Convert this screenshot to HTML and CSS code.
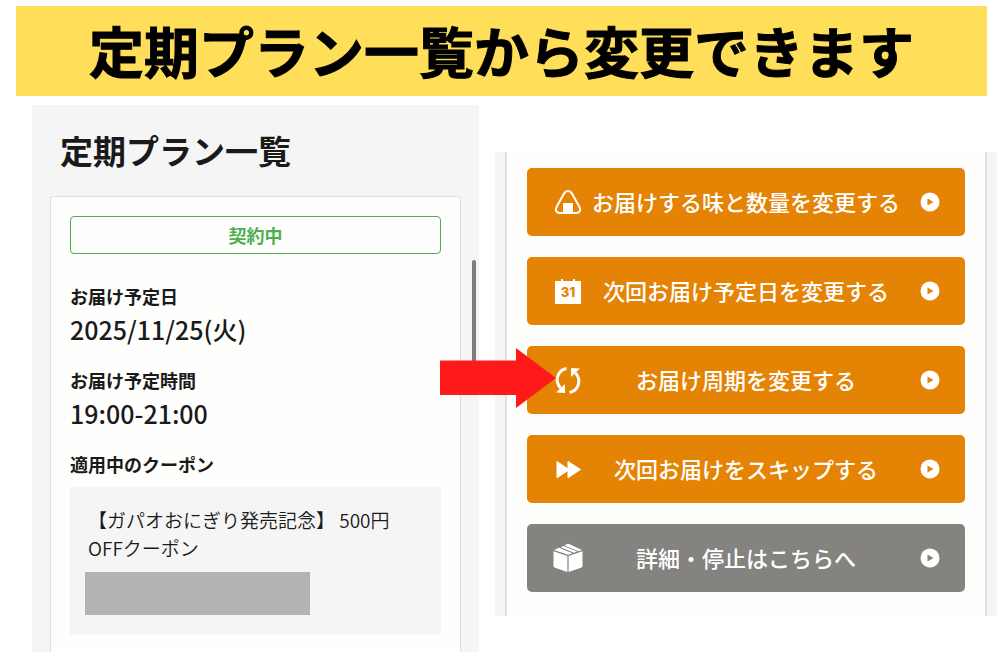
FILE: index.html
```html
<!DOCTYPE html>
<html lang="ja">
<head>
  <meta charset="UTF-8">
  <meta name="viewport" content="width=device-width, initial-scale=1">
  <title>定期プラン一覧</title>
  <link rel="stylesheet" href="styles.css">
</head>
<body>
  <h1 class="banner">定期プラン一覧から変更できます</h1>

  <main class="columns">
    <!-- プラン詳細 -->
    <section class="plan">
      <h2 class="plan__title">定期プラン一覧</h2>
      <div class="plan__card">
        <p class="plan__status">契約中</p>
        <dl class="plan__info">
          <dt>お届け予定日</dt>
          <dd>2025/11/25(火)</dd>
          <dt>お届け予定時間</dt>
          <dd>19:00-21:00</dd>
          <dt>適用中のクーポン</dt>
        </dl>
        <div class="coupon">
          <p class="coupon__name">【ガパオおにぎり発売記念】 500円<br>OFFクーポン</p>
          <div class="coupon__code"></div>
        </div>
      </div>
      <div class="plan__scrollbar"></div>
    </section>

    <!-- 変更メニュー -->
    <section class="menu">
      <ul class="menu__list">
        <li class="menu__item">
          <button class="btn" type="button">
            <svg class="btn__icon" viewBox="0 0 32 32">
              <path d="M16 4.900c-1.700 0-2.900.8-3.800 2.400L4.800 20.400C2.900 23.800 4 27 7.500 27h17c3.500 0 4.600-3.200 2.700-6.600L19.800 7.300C18.900 5.700 17.700 4.900 16 4.900z" fill="none" stroke="#fff" stroke-width="2"/>
              <path d="M11 17h10v10H11z" fill="#fff"/>
            </svg>
            <span class="btn__text">お届けする味と数量を変更する</span>
            <svg class="btn__play" viewBox="0 0 20 20"><circle cx="10" cy="10" r="9.500" fill="#fff"/><path d="M7.500 6.500v7l6-3.500z" fill="currentColor"/></svg>
          </button>
        </li>
        <li class="menu__item">
          <button class="btn" type="button">
            <svg class="btn__icon" viewBox="0 0 32 32">
              <path d="M4 6h5V4h2v2h10V4h2v2h6v23H3V6z" fill="#fff"/>
              <text class="btn__day" x="16" y="22" text-anchor="middle">31</text>
            </svg>
            <span class="btn__text">次回お届け予定日を変更する</span>
            <svg class="btn__play" viewBox="0 0 20 20"><circle cx="10" cy="10" r="9.500" fill="#fff"/><path d="M7.500 6.500v7l6-3.500z" fill="currentColor"/></svg>
          </button>
        </li>
        <li class="menu__item">
          <button class="btn" type="button">
            <svg class="btn__icon" viewBox="0 0 32 32">
              <path d="M14.500 4.500C6.500 6 1.500 16 8.500 24" fill="none" stroke="#fff" stroke-width="3"/>
              <path d="M4 28.500l9 .5V20z" fill="#fff"/>
              <path d="M17.500 28.500C25.500 27 30.500 17 23.500 9" fill="none" stroke="#fff" stroke-width="3"/>
              <path d="M28 4.500L19 4v9z" fill="#fff"/>
            </svg>
            <span class="btn__text">お届け周期を変更する</span>
            <svg class="btn__play" viewBox="0 0 20 20"><circle cx="10" cy="10" r="9.500" fill="#fff"/><path d="M7.500 6.500v7l6-3.500z" fill="currentColor"/></svg>
          </button>
          <svg class="menu__pointer" viewBox="0 0 116 60"><path d="M0 12.500h76V0l40 30-40 30V47H0z" fill="#ff1a1a"/></svg>
        </li>
        <li class="menu__item">
          <button class="btn" type="button">
            <svg class="btn__icon" viewBox="0 0 32 32">
              <path d="M5 8.500L16 16V8.500L28.500 16.500 16 24.800v-7.300L5 24.800z" fill="#fff" stroke="#fff" stroke-linejoin="round"/>
            </svg>
            <span class="btn__text">次回お届けをスキップする</span>
            <svg class="btn__play" viewBox="0 0 20 20"><circle cx="10" cy="10" r="9.500" fill="#fff"/><path d="M7.500 6.500v7l6-3.500z" fill="currentColor"/></svg>
          </button>
        </li>
        <li class="menu__item">
          <button class="btn btn--gray" type="button">
            <svg class="btn__icon" viewBox="0 0 32 32">
              <path d="M1.500 9.300L15.400 14v16L3 25.800Q1.500 25.200 1.500 24zM30.500 9.300L16.600 14v16L29 25.800q1.500-.6 1.500-1.800z" fill="#fff"/>
              <path d="M2 8l5-2.200L20.500 11.200 16 12.700zM8.500 5.200l3-1.300L25 9.500l-3 1.200zM12.500 3.400L15 2q1-.4 2 0l13 6-3.500 1.200z" fill="#fff"/>
            </svg>
            <span class="btn__text">詳細・停止はこちらへ</span>
            <svg class="btn__play" viewBox="0 0 20 20"><circle cx="10" cy="10" r="9.500" fill="#fff"/><path d="M7.500 6.500v7l6-3.500z" fill="currentColor"/></svg>
          </button>
        </li>
      </ul>
    </section>
  </main>
</body>
</html>
```
FILE: styles.css
```css
* {
  box-sizing: border-box;
}

body {
  margin: 0;
  background: #fff;
  color: #1a1a1a;
  font-family: "Noto Sans CJK JP", sans-serif;
}

h1, h2, p, dl, dd, ul {
  margin: 0;
  padding: 0;
}

.banner {
  padding-bottom: 4px;
  margin: 6px 13px 9px 16px;
  background: #ffde59;
  color: #000;
  font-size: 55px;
  font-weight: 700;
  line-height: 86px;
  text-align: center;
  white-space: nowrap;
  -webkit-text-stroke: 1px #000;
}

.columns {
  display: grid;
  grid-template-columns: 447fr 502fr;
  align-items: start;
  gap: 16px;
  padding: 0 3px 0 32px;
}

/* ====== プラン ====== */
.plan {
  position: relative;
  padding: 20px 18px 0;
  background: #f5f5f6;
}

.plan__title {
  padding-left: 10px;
  margin-bottom: 21px;
  font-size: 33px;
  font-weight: 700;
  line-height: 50px;
}

.plan__card {
  padding: 19px 19px 17px;
  background: #fefefc;
  border: 1px solid #e3dfdb;
  border-bottom: 0;
  border-radius: 4px 4px 0 0;
}

.plan__status {
  border: 1px solid #4caf50;
  border-radius: 4px;
  color: #4caf50;
  font-size: 18px;
  font-weight: 700;
  line-height: 36px;
  text-align: center;
}

.plan__info {
  padding-top: 28px;
}

.plan__info dt {
  font-size: 18px;
  font-weight: 700;
  line-height: 28px;
}

.plan__info dd {
  margin-bottom: 18px;
  font-size: 25px;
  font-weight: 500;
  line-height: 38px;
}

.plan__scrollbar {
  position: absolute;
  top: 155px;
  right: 3px;
  width: 4px;
  height: 115px;
  border-radius: 2px;
  background: #7d7d7d;
}

.coupon {
  margin-top: 9px;
  padding: 19px 15px 20px;
  background: #f5f5f6;
}

.coupon__name {
  padding-left: 3px;
  margin-bottom: 10px;
  font-size: 19px;
  font-weight: 350;
  line-height: 28px;
}

.coupon__code {
  width: 66%;
  height: 43px;
  background: #b3b3b3;
}

/* ====== メニュー ====== */
.menu {
  margin-top: 47px;
  padding: 0 10px;
  background: #f5f5f6;
}

.menu__list {
  display: flex;
  flex-direction: column;
  gap: 21px;
  padding: 16px 20px 24px;
  background: #fefefc;
  border: solid #e3dfdb;
  border-width: 0 2px;
  list-style: none;
}

.menu__item {
  position: relative;
}

.menu__pointer {
  position: absolute;
  top: 2px;
  left: -87px;
  width: 116px;
  height: 60px;
}

.btn {
  display: grid;
  grid-template-columns: 32px 1fr 32px;
  align-items: center;
  width: 100%;
  height: 68px;
  padding: 0 25px;
  background: #e58304;
  border: 0;
  border-radius: 5px;
  color: #fff;
  font-family: inherit;
  font-size: 22px;
  font-weight: 500;
  white-space: nowrap;
}

.btn--gray {
  background: #848380;
}

.btn__icon {
  width: 32px;
  height: 32px;
}

.btn__text {
  padding-bottom: 3px;
}

.btn__day {
  fill: #e58304;
  font-family: Inter, sans-serif;
  font-size: 13px;
  font-weight: 800;
}

.btn__play {
  justify-self: end;
  width: 20px;
  height: 20px;
  color: #e58304;
}

.btn--gray .btn__play {
  color: #848380;
}
```
